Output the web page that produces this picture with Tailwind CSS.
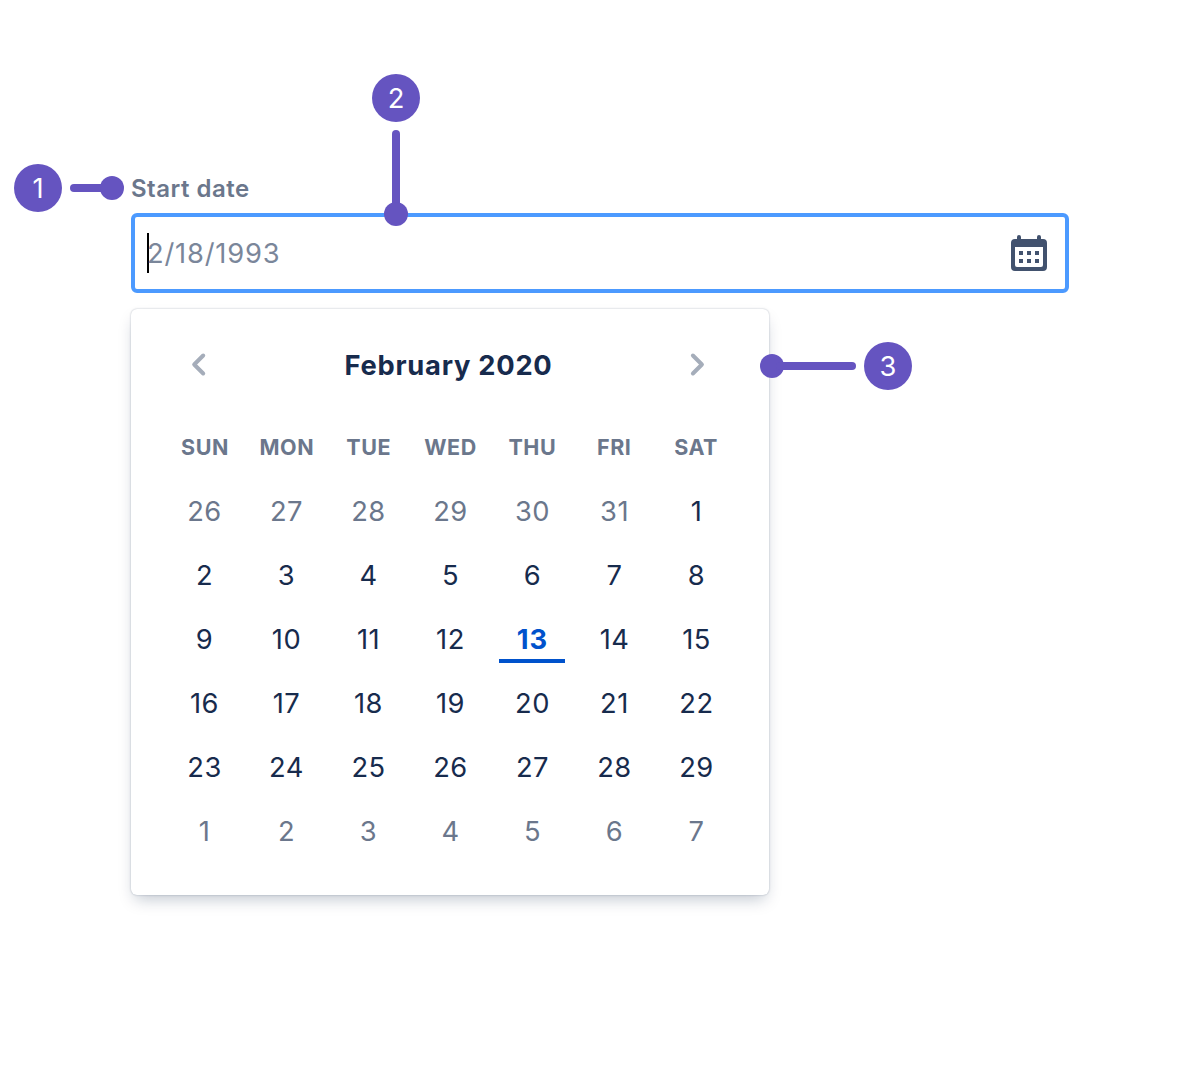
<!DOCTYPE html>
<html lang="en">
<head>
<meta charset="utf-8">
<title>Date picker anatomy</title>
<script src="https://cdn.jsdelivr.net/npm/@tailwindcss/browser@4"></script>
</head>
<body class="bg-white">
<main class="relative h-[1068px] w-[1200px] overflow-hidden pl-[131px] pt-[172px] font-['Inter',sans-serif] text-[27.3px]/[42px] text-[#172b4d]">
  <div class="h-[41px] text-[24px]/[33px] font-semibold tracking-[0.5px] text-[#6b778c]">Start date</div>
  <div class="flex h-20 w-[938px] items-center justify-between rounded-[6px] border-4 border-[#4c9aff] bg-white pl-3 pr-[14px]">
    <div class="flex items-center">
      <span class="h-10 w-[2px] bg-black"></span>
      <span class="-ml-[2px] pt-[2px] tracking-[0.8px] text-[#7a869a]">2/18/1993</span>
    </div>
    <svg class="size-[44px]" viewBox="0 0 44 44" fill="none">
      <path fill="#42526e" fill-rule="evenodd" d="M8 8h2V6a2 2 0 0 1 4 0v2h16V6a2 2 0 0 1 4 0v2h2a4 4 0 0 1 4 4v24a4 4 0 0 1-4 4H8a4 4 0 0 1-4-4V12a4 4 0 0 1 4-4zm0 8v18a2 2 0 0 0 2 2h24a2 2 0 0 0 2-2V16z"/>
      <path fill="#42526e" d="M12 20h4v4h-4zM20 20h4v4h-4zM28 20h4v4h-4zM12 28h4v4h-4zM20 28h4v4h-4zM28 28h4v4h-4z"/>
    </svg>
  </div>

  <section class="mt-4 h-[586px] w-[638px] rounded-[6px] bg-white px-8 pt-8 shadow-[0_8px_16px_-4px_rgba(9,30,66,0.25),0_0_2px_0_rgba(9,30,66,0.31)]">
    <header class="flex h-12 items-center justify-between pl-[21px] pr-6">
      <svg class="size-7" viewBox="0 0 28 28" fill="none" stroke="#a5adba" stroke-width="4" stroke-linecap="round" stroke-linejoin="round"><path d="M19.2 4.5 10.2 13.5 19.2 22.5"/></svg>
      <h2 class="pt-[2px] font-bold tracking-[0.75px]">February 2020</h2>
      <svg class="size-7" viewBox="0 0 28 28" fill="none" stroke="#a5adba" stroke-width="4" stroke-linecap="round" stroke-linejoin="round"><path d="M7.9 4.5 16.9 13.5 7.9 22.5"/></svg>
    </header>
    <div class="mb-2 mt-[34px] grid h-12 w-[574px] grid-cols-7 place-items-center pl-px text-[21.5px]/[30px] font-bold tracking-[0.5px] text-[#6b778c]">
      <span>SUN</span><span>MON</span><span>TUE</span><span>WED</span><span>THU</span><span>FRI</span><span>SAT</span>
    </div>
    <div class="grid w-[574px] auto-rows-[64px] grid-cols-7 place-items-center tracking-[0.5px]" id="days"></div>
  </section>

  <div class="absolute left-[14px] top-[164px] flex items-center text-white">
    <span class="flex size-12 items-center justify-center rounded-full bg-[#6554c0] pt-[2px]">1</span>
    <span class="ml-2 h-2 w-9 rounded-full bg-[#6554c0]"></span>
    <span class="-ml-[6px] size-6 rounded-full bg-[#6554c0]"></span>
  </div>
  <div class="absolute left-[372px] top-[74px] flex flex-col items-center text-white">
    <span class="flex size-12 items-center justify-center rounded-full bg-[#6554c0] pt-[2px]">2</span>
    <span class="mt-2 h-20 w-2 rounded-full bg-[#6554c0]"></span>
    <span class="-mt-2 size-6 rounded-full bg-[#6554c0]"></span>
  </div>
  <div class="absolute left-[760px] top-[342px] flex items-center text-white">
    <span class="size-6 rounded-full bg-[#6554c0]"></span>
    <span class="-ml-[8px] h-2 w-20 rounded-full bg-[#6554c0]"></span>
    <span class="ml-2 flex size-12 items-center justify-center rounded-full bg-[#6554c0] pt-[2px]">3</span>
  </div>
</main>
<script>
  const days = document.getElementById('days');
  const start = new Date(2020, 0, 26);
  for (let i = 0; i < 42; i++) {
    const d = new Date(start.getFullYear(), start.getMonth(), start.getDate() + i);
    const el = document.createElement('span');
    el.textContent = d.getDate();
    const inMonth = d.getMonth() === 1;
    if (inMonth && d.getDate() === 13) {
      el.className = 'flex h-12 w-[66px] items-center justify-center border-y-4 border-t-transparent border-b-[#0052cc] pl-px pt-[2px] font-bold tracking-[1.1px] text-[#0052cc]';
    } else {
      el.className = inMonth ? 'pl-px pt-[2px]' : 'pl-px pt-[2px] text-[#6b778c]';
    }
    days.append(el);
  }
</script>
</body>
</html>
